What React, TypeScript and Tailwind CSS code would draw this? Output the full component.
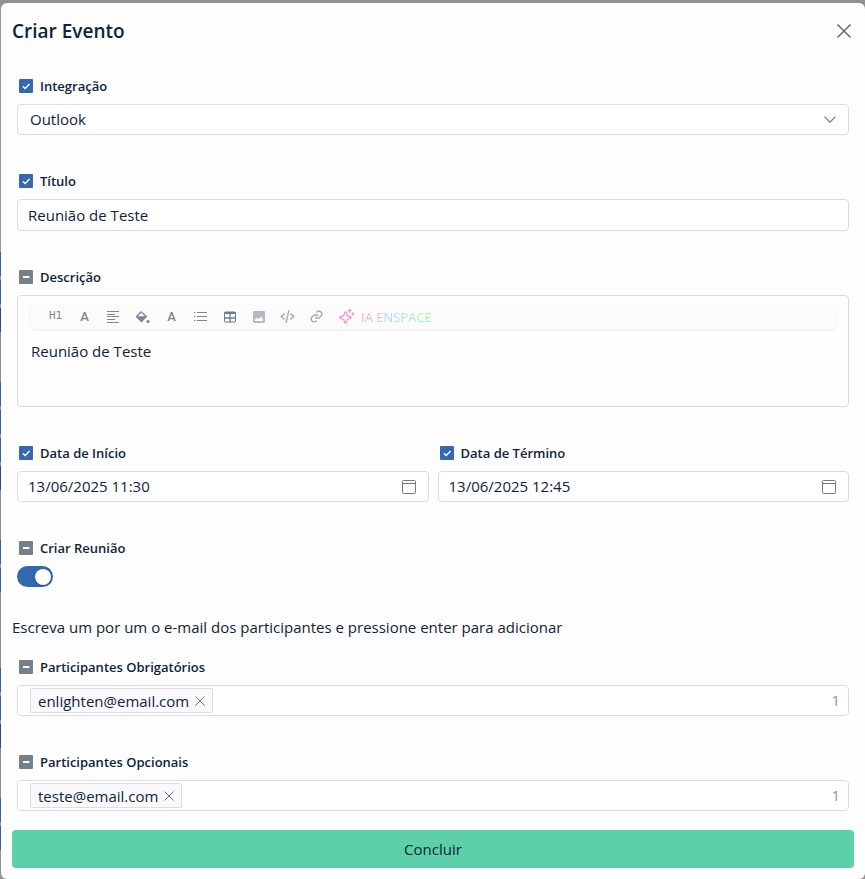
import { useRef, useEffect, useState, type ReactNode } from "react";
import { BiCodeAlt, BiLink } from "react-icons/bi";
import { PiSparkle } from "react-icons/pi";

function FieldLabel({
  id,
  children,
  state = "checked",
}: {
  id: string;
  children: ReactNode;
  state?: "checked" | "partial";
}) {
  const box = useRef<HTMLInputElement>(null);
  const partial = state === "partial";
  useEffect(() => {
    if (box.current) box.current.indeterminate = partial;
  }, [partial]);
  return (
    <div className="flex h-5 items-center gap-[7px] pl-0.5">
      <span className="grid size-[14px] shrink-0">
        <input
          ref={box}
          type="checkbox"
          defaultChecked={!partial}
          aria-label={`Usar ${children}`}
          className="col-start-1 row-start-1 size-[14px] appearance-none rounded-[1px] bg-[#747f8a] checked:bg-[#3568b0]"
        />
        <svg
          viewBox="0 0 14 14"
          className="pointer-events-none col-start-1 row-start-1 size-[14px]"
          fill="none"
          stroke="#ffffff"
          aria-hidden="true"
        >
          {partial ? (
            <path d="M4 7h6.5" strokeWidth="2" />
          ) : (
            <path d="M3.8 7.2 6.1 9.4 10.6 4.9" strokeWidth="1.4" />
          )}
        </svg>
      </span>
      <label htmlFor={id} className="text-[13px] leading-5 font-semibold">
        {children}
      </label>
    </div>
  );
}

function Field({ children }: { children: ReactNode }) {
  return <div className="flex min-w-0 flex-col gap-2">{children}</div>;
}

function CalendarIcon() {
  return (
    <svg viewBox="0 0 14 14" className="size-[14px] shrink-0" fill="none" stroke="#6d7a8c" aria-hidden="true">
      <rect x="0.5" y="0.5" width="13" height="13" rx="1" />
      <path d="M.5 3.5h13" />
    </svg>
  );
}

function DateField({ id, label, value }: { id: string; label: string; value: string }) {
  return (
    <Field>
      <FieldLabel id={id}>{label}</FieldLabel>
      <div className="flex h-[31px] items-center rounded-[4px] border border-[#dadde0] bg-white pr-3 pl-2.5">
        <input id={id} defaultValue={value} className="min-w-0 flex-1 bg-transparent text-[15px] outline-none" />
        <CalendarIcon />
      </div>
    </Field>
  );
}

function TagField({ id, label, email }: { id: string; label: string; email: string }) {
  return (
    <Field>
      <FieldLabel id={id} state="partial">
        {label}
      </FieldLabel>
      <div className="flex h-[31px] items-center rounded-[4px] border border-[#dadde0] bg-white pr-2 pl-3">
        <span className="flex h-[25px] items-center gap-1.5 rounded-[2px] border border-[#dcdee2] bg-[#f9f9fc] px-[7px] text-[15px] leading-5">
          {email}
          <button type="button" aria-label={`Remover ${email}`}>
            <svg viewBox="0 0 10 10" className="size-2.5" fill="none" stroke="#6b7075" aria-hidden="true">
              <path d="M.5.5l9 9M9.500.5l-9 9" />
            </svg>
          </button>
        </span>
        <input id={id} className="min-w-0 flex-1 bg-transparent outline-none" />
        <span className="text-[15px] text-[#8b929b]">1</span>
      </div>
    </Field>
  );
}

function Tool({ name, children }: { name: string; children: ReactNode }) {
  return (
    <button type="button" aria-label={name} className="flex h-5 w-[15px] items-center justify-center">
      {children}
    </button>
  );
}

function Toolbar() {
  return (
    <div className="flex h-[25px] items-center gap-[14px] rounded-md bg-[#fbfbfb] px-[18px] text-[#7d8793] shadow-[0_1px_3px_rgba(0,0,0,0.08)]">
      <Tool name="Título">
        <span className="font-['DejaVu_Sans_Mono',monospace] text-[11px]">H1</span>
      </Tool>
      <Tool name="Fonte">
        <span className="font-['Roboto'] text-[13px] font-medium">A</span>
      </Tool>
      <Tool name="Alinhar">
        <svg viewBox="0 0 13 12" className="h-3 w-[13px]" fill="none" stroke="currentColor" aria-hidden="true">
          <path d="M0 .5h12M0 3.500h8M0 5.500h12M0 8.500h8M0 11.500h12" strokeWidth="1.200" />
        </svg>
      </Tool>
      <Tool name="Preenchimento">
        <svg viewBox="0 0 15 15" className="size-[15px] shrink-0" aria-hidden="true">
          <path d="M4.800.8 12.300 7.600 6.500 13.600.5 7.600 6.100 2z" fill="currentColor" />
          <path d="M6.300 3.700 2.800 7.300H9.800z" fill="#fbfbfb" />
          <circle cx="13" cy="12.500" r="1.600" fill="currentColor" />
        </svg>
      </Tool>
      <Tool name="Cor do texto">
        <span className="font-['Roboto'] text-[13px] font-medium">A</span>
      </Tool>
      <Tool name="Lista">
        <svg viewBox="0 0 13 12" className="h-3 w-[13px]" fill="none" stroke="currentColor" aria-hidden="true">
          <path d="M0 1.500h1.500M3 1.500h10M0 5.500h1.500M3 5.500h10M0 9.500h1.500M3 9.500h10" strokeWidth="1.200" />
        </svg>
      </Tool>
      <Tool name="Tabela">
        <svg viewBox="0 0 12 12" className="size-3" fill="none" stroke="#6f7a88" aria-hidden="true">
          <rect x="0.5" y="1" width="11" height="10" rx="1" />
          <path d="M.5 2h11" strokeWidth="2" />
          <path d="M6 2v9M.5 7h11" strokeWidth="1.300" />
        </svg>
      </Tool>
      <Tool name="Imagem">
        <svg viewBox="0 0 12 12" className="size-3" aria-hidden="true">
          <rect width="12" height="12" rx="1.300" fill="#b3bac2" />
          <path d="M2 10V8.500L4 6.500 5.500 8 8 5.500l2 2.500v2z" fill="#fbfbfb" />
        </svg>
      </Tool>
      <Tool name="Código">
        <BiCodeAlt className="size-[17px] shrink-0 text-[#a3abb4]" />
      </Tool>
      <Tool name="Link">
        <BiLink className="size-[17px] shrink-0 text-[#a3abb4]" />
      </Tool>
      <button type="button" className="flex items-center gap-1.5 text-[13px] leading-5">
        <PiSparkle className="size-[17px] text-[#ff82c8]" />
        <span className="bg-linear-to-r from-[#ff9fd0] via-[#a8dcf8] to-[#a0ff9c] bg-clip-text text-transparent">
          IA ENSPACE
        </span>
      </button>
    </div>
  );
}

function PageEdge() {
  return (
    <div className="w-px shrink-0" aria-hidden="true">
      <div className="h-[249px] bg-[#97979a]" />
      <div className="h-6 bg-[#3d5f9f]" />
      <div className="h-1 bg-[#97979a]" />
      <div className="h-6 bg-[#3d5f9f]" />
      <div className="h-1 bg-[#97979a]" />
      <div className="h-6 bg-[#2c4a85]" />
      <div className="h-[50px] bg-[#8c8d8d]" />
      <div className="h-6 bg-[#3d5f9f]" />
      <div className="h-1 bg-[#97979a]" />
      <div className="h-6 bg-[#3d5f9f]" />
      <div className="h-1 bg-[#97979a]" />
      <div className="h-6 bg-[#3d5f9f]" />
      <div className="h-1 bg-[#97979a]" />
      <div className="h-6 bg-[#2c4a85]" />
      <div className="h-[50px] bg-[#8c8d8d]" />
      <div className="h-6 bg-[#3d5f9f]" />
      <div className="h-1 bg-[#97979a]" />
      <div className="h-6 bg-[#3d5f9f]" />
      <div className="h-[76px] bg-[#8c8d8d]" />
      <div className="h-6 bg-[#3d5f9f]" />
      <div className="h-1 bg-[#97979a]" />
      <div className="h-6 bg-[#3d5f9f]" />
      <div className="h-1 bg-[#97979a]" />
      <div className="h-6 bg-[#2c4a85]" />
      <div className="h-[50px] bg-[#8c8d8d]" />
      <div className="h-6 bg-[#3d5f9f]" />
      <div className="h-1 bg-[#97979a]" />
      <div className="h-6 bg-[#3d5f9f]" />
    </div>
  );
}

export default function App() {
  const [meeting, setMeeting] = useState(true);
  return (
    <div className="flex min-h-screen bg-[#929196] pt-[3px] font-['Open_Sans','Noto_Sans',sans-serif] text-[#0f2438]">
      <PageEdge />
      <main role="dialog" aria-labelledby="dialog-title" className="min-w-0 flex-1 rounded-md bg-[#fdfdfd] pr-[11px] pb-[11px] pl-[11px]">
        <header className="flex h-14 items-center justify-between pr-[3px]">
          <h1 id="dialog-title" className="text-[19px] leading-6 font-semibold">
            Criar Evento
          </h1>
          <button type="button" aria-label="Fechar">
            <svg viewBox="0 0 14 14" className="size-[14px]" fill="none" stroke="#5f6063" strokeWidth="1.400" aria-hidden="true">
              <path d="M.5.5l13 13M13.500.5l-13 13" />
            </svg>
          </button>
        </header>

        <form className="pt-[17px]" onSubmit={(e) => e.preventDefault()}>
          <div className="flex flex-col gap-9 pr-[5px] pl-[5px]">
            <Field>
              <FieldLabel id="integracao">Integração</FieldLabel>
              <div className="grid">
                <select
                  id="integracao"
                  className="col-start-1 row-start-1 h-[31px] w-full appearance-none rounded-[4px] border border-[#dadde0] bg-white px-3 text-[15px] outline-none"
                >
                  <option>Outlook</option>
                </select>
                <svg
                  viewBox="0 0 12 7"
                  className="pointer-events-none col-start-1 row-start-1 mr-[13px] h-[7px] w-3 self-center justify-self-end"
                  fill="none"
                  stroke="#6d7a8c"
                  strokeWidth="1.200"
                  aria-hidden="true"
                >
                  <path d="M.5.7 6 6.200 11.500.7" />
                </svg>
              </div>
            </Field>

            <Field>
              <FieldLabel id="titulo">Título</FieldLabel>
              <input
                id="titulo"
                defaultValue="Reunião de Teste"
                className="h-8 w-full rounded-[4px] border border-[#dadde0] bg-white px-2.5 text-[15px] outline-none"
              />
            </Field>

            <Field>
              <FieldLabel id="descricao" state="partial">
                Descrição
              </FieldLabel>
              <div className="flex h-28 flex-col rounded-[4px] border border-[#dadde0] px-3 pt-2">
                <Toolbar />
                <textarea
                  id="descricao"
                  defaultValue="Reunião de Teste"
                  className="mt-2.5 w-full flex-1 resize-none bg-transparent px-px text-[15px] leading-6 outline-none"
                />
              </div>
            </Field>

            <div className="grid grid-cols-2 gap-[9px]">
              <DateField id="inicio" label="Data de Início" value="13/06/2025 11:30" />
              <DateField id="termino" label="Data de Término" value="13/06/2025 12:45" />
            </div>

            <Field>
              <FieldLabel id="reuniao" state="partial">
                Criar Reunião
              </FieldLabel>
              <button
                id="reuniao"
                type="button"
                role="switch"
                aria-checked={meeting}
                onClick={() => setMeeting(!meeting)}
                className="flex h-[21px] w-9 items-center justify-start rounded-full bg-[#b4bac2] px-0.5 aria-checked:justify-end aria-checked:bg-[#3568b0]"
              >
                <span className="size-4 rounded-full bg-white shadow-[0_1px_3px_rgba(0,0,0,0.3)]" />
              </button>
            </Field>
          </div>

          <p className="pt-7 pb-[18px] text-[15px] leading-6">
            Escreva um por um o e-mail dos participantes e pressione enter para adicionar
          </p>

          <div className="flex flex-col gap-9 pr-[5px] pl-[5px]">
            <TagField id="obrigatorios" label="Participantes Obrigatórios" email="enlighten@email.com" />
            <TagField id="opcionais" label="Participantes Opcionais" email="teste@email.com" />
          </div>

          <button type="submit" className="mt-[19px] h-[38px] w-full rounded-[4px] bg-[#5bd0a9] text-[15px]">
            Concluir
          </button>
        </form>
      </main>
    </div>
  );
}
